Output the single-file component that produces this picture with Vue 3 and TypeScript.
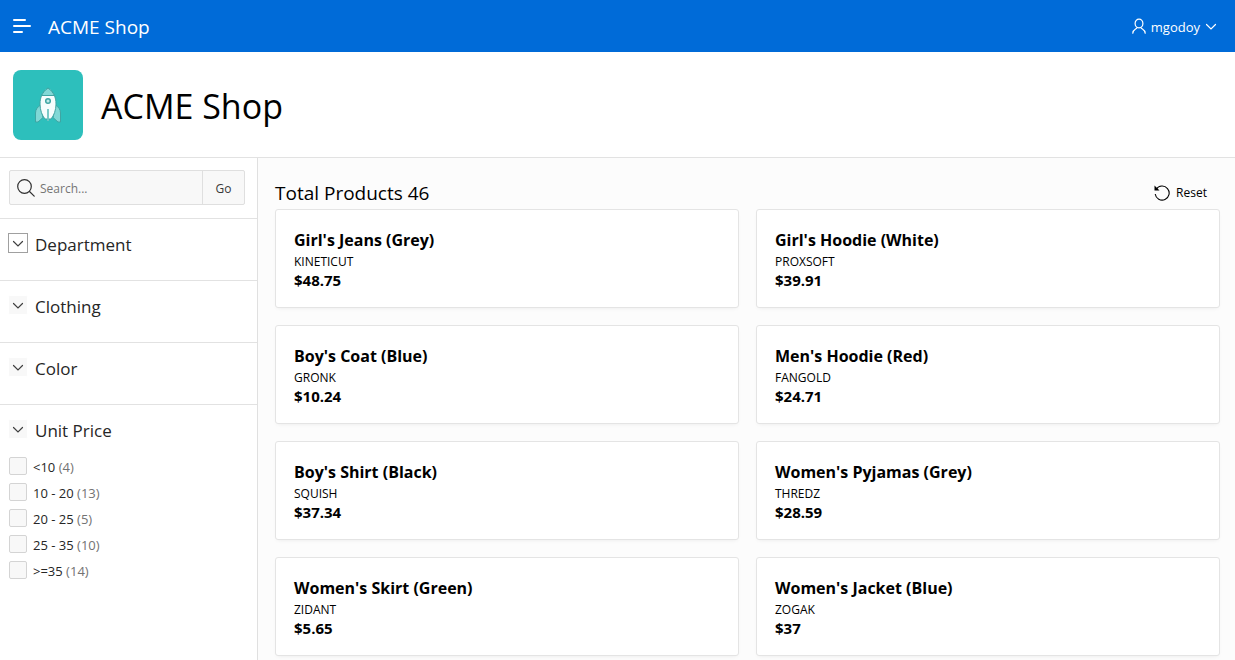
<script setup lang="ts">
import { ref } from 'vue'

interface Product {
  name: string
  brand: string
  price: string
}

interface PriceRange {
  id: string
  label: string
  count: number
}

const query = ref('')
const selected = ref<string[]>([])
const collapsedFacets: string[] = ['Department', 'Clothing', 'Color']

const ranges: PriceRange[] = [
  { id: 'p0', label: '<10', count: 4 },
  { id: 'p10', label: '10 - 20', count: 13 },
  { id: 'p20', label: '20 - 25', count: 5 },
  { id: 'p25', label: '25 - 35', count: 10 },
  { id: 'p35', label: '>=35', count: 14 },
]

const products: Product[] = [
  { name: "Girl's Jeans (Grey)", brand: 'KINETICUT', price: '$48.75' },
  { name: "Girl's Hoodie (White)", brand: 'PROXSOFT', price: '$39.91' },
  { name: "Boy's Coat (Blue)", brand: 'GRONK', price: '$10.24' },
  { name: "Men's Hoodie (Red)", brand: 'FANGOLD', price: '$24.71' },
  { name: "Boy's Shirt (Black)", brand: 'SQUISH', price: '$37.34' },
  { name: "Women's Pyjamas (Grey)", brand: 'THREDZ', price: '$28.59' },
  { name: "Women's Skirt (Green)", brand: 'ZIDANT', price: '$5.65' },
  { name: "Women's Jacket (Blue)", brand: 'ZOGAK', price: '$37' },
]

function reset(): void {
  query.value = ''
  selected.value = []
}
</script>

<template>
  <div class="page">
    <header class="topbar">
      <button class="menu" type="button" aria-label="Main navigation">
        <svg width="18" height="14" viewBox="0 0 18 14" fill="none" stroke="#fff" stroke-width="2" stroke-linecap="round">
          <path d="M1 1h11M1 7h16M1 13h8" />
        </svg>
      </button>
      <a class="brand" href="#">ACME Shop</a>
      <button class="user" type="button">
        <svg width="14" height="16" viewBox="0 0 14 16" fill="none" stroke="#fff" stroke-width="1.2" stroke-linecap="round">
          <ellipse cx="7" cy="5.500" rx="3.9" ry="4.4" />
          <path d="M5 9.700C4.400 11.300 1 11.100.8 15.200M9 9.700c.6 1.600 4 1.400 4.200 5.500" />
        </svg>
        <span>mgodoy</span>
        <svg width="12" height="8" viewBox="0 0 12 8" fill="none" stroke="#fff" stroke-width="1.2" stroke-linecap="round">
          <path d="M1.500 2.500 6 7l4.500-4.500" />
        </svg>
      </button>
    </header>

    <section class="hero">
      <div class="logo">
        <svg width="28" height="36" viewBox="0 0 28 36" stroke="#3fa5a3" stroke-width="1" stroke-linejoin="round">
          <path d="M6.500 18C3.500 20 1.500 22.500 1.500 26v9h2.500L9 30.500zM21.500 18c3 2 5 4.500 5 8v9H24l-5-4.500z" fill="#81d8d6" />
          <path d="M14 1C8.500 5 6 10 6 17c0 6 2 11.500 5 15h6c3-3.500 5-9 5-15 0-7-2.500-12-8-16z" fill="#f6fdfd" />
          <path d="M14 1c-2.800 2-5 4.500-6.400 7.500h12.800C19 5.500 16.800 3 14 1z" fill="#81d8d6" />
          <circle cx="14" cy="14" r="2.300" fill="#c0ebea" stroke-width="1.500" />
          <path d="M14 22v12" stroke="#6fc4c2" stroke-width="1.800" />
        </svg>
      </div>
      <h1>ACME Shop</h1>
    </section>

    <div class="body">
      <aside class="sidebar">
        <form class="search" @submit.prevent>
          <label class="field">
            <svg width="18" height="18" viewBox="0 0 18 18" fill="none" stroke="#303030" stroke-width="1.2" stroke-linecap="round">
              <circle cx="7.500" cy="7.500" r="6.800" />
              <path d="m12.500 12.500 4.700 4.700" />
            </svg>
            <input v-model="query" type="text" placeholder="Search..." aria-label="Search" />
          </label>
          <button class="go" type="submit">Go</button>
        </form>

        <section v-for="(facet, i) in collapsedFacets" :key="facet" class="facet">
          <div class="facet-head">
            <button class="toggle" :class="{ focused: i === 0 }" type="button" :aria-label="facet">
              <svg width="12" height="8" viewBox="0 0 12 8" fill="none" stroke="#404040" stroke-width="1.200" stroke-linecap="round">
                <path d="M1.500 2.500 6 7l4.500-4.500" />
              </svg>
            </button>
            <h2>{{ facet }}</h2>
          </div>
        </section>

        <section class="facet">
          <div class="facet-head">
            <button class="toggle" type="button" aria-label="Unit Price">
              <svg width="12" height="8" viewBox="0 0 12 8" fill="none" stroke="#404040" stroke-width="1.200" stroke-linecap="round">
                <path d="M1.500 2.500 6 7l4.500-4.500" />
              </svg>
            </button>
            <h2>Unit Price</h2>
          </div>
          <ul class="ranges">
            <li v-for="range in ranges" :key="range.id">
              <input :id="range.id" v-model="selected" type="checkbox" :value="range.id" />
              <label :for="range.id">{{ range.label }} <span class="count">({{ range.count }})</span></label>
            </li>
          </ul>
        </section>
      </aside>

      <main class="content">
        <div class="toolbar">
          <p class="total">Total Products 46</p>
          <button class="reset" type="button" @click="reset">
            <svg width="16" height="16" viewBox="0 0 16 16" fill="none" stroke="#000" stroke-width="1.100">
              <path d="M2.300 4.200A7 7 0 1 1 1.200 9" />
              <path d="M.5.500v5h5z" fill="#000" stroke="none" />
            </svg>
            <span>Reset</span>
          </button>
        </div>
        <ul class="cards">
          <li v-for="product in products" :key="product.name" class="card">
            <h3>{{ product.name }}</h3>
            <p class="maker">{{ product.brand }}</p>
            <p class="price">{{ product.price }}</p>
          </li>
        </ul>
      </main>
    </div>
  </div>
</template>

<style>
body {
  margin: 0;
}
</style>

<style scoped>
.page {
  display: flex;
  flex-direction: column;
  min-height: 100vh;
  background: #fff;
  color: #000;
  font-family: "Segoe UI", "Open Sans", "Noto Sans", sans-serif;
  font-size: 12px;
}

.page * {
  box-sizing: border-box;
}

h1,
h2,
h3,
p,
ul {
  margin: 0;
  padding: 0;
  font-weight: 400;
  list-style: none;
}

button,
input {
  margin: 0;
  padding: 0;
  border: 0;
  background: none;
  color: inherit;
  font: inherit;
}

svg {
  display: block;
  flex: none;
}

.topbar {
  display: flex;
  align-items: center;
  height: 52px;
  padding: 0 18px 0 13px;
  background: #006bd8;
  color: #fff;
}

.menu {
  width: 35px;
}

.brand {
  padding-top: 2px;
  color: #fff;
  font-size: 19px;
  line-height: 24px;
  text-decoration: none;
}

.user {
  display: flex;
  align-items: center;
  gap: 5px;
  margin-left: auto;
  font-size: 13px;
}

.user span {
  padding-top: 2px;
}

.hero {
  display: flex;
  align-items: center;
  gap: 18px;
  padding: 18px 13px 17px;
  border-bottom: 1px solid #e2e2e2;
}

.logo {
  display: flex;
  align-items: center;
  justify-content: center;
  width: 70px;
  height: 70px;
  border-radius: 8px;
  background: #2dbfbc;
}

h1 {
  padding-top: 2px;
  font-size: 34px;
  line-height: 44px;
}

.body {
  display: flex;
  flex: 1;
}

.sidebar {
  flex: none;
  width: 258px;
  border-right: 1px solid #e0e0e0;
}

.search {
  display: flex;
  height: 35px;
  margin: 12px 12px 13px 9px;
  border: 1px solid #dfdfdf;
  border-radius: 2px;
  background: #f8f8f8;
}

.field {
  display: flex;
  flex: 1;
  align-items: center;
  gap: 5px;
  min-width: 0;
  padding-left: 7px;
}

.field input {
  flex: 1;
  min-width: 0;
  padding-top: 2px;
  outline: 0;
}

.field input::placeholder {
  color: #757575;
  opacity: 1;
}

.go {
  width: 42px;
  padding-top: 2px;
  border-left: 1px solid #dfdfdf;
  color: #383838;
}

.facet {
  min-height: 62px;
  padding: 14px 8px 0;
  border-top: 1px solid #e2e2e2;
}

.facet-head {
  display: flex;
  align-items: flex-start;
  gap: 7px;
}

.toggle {
  display: flex;
  align-items: center;
  justify-content: center;
  width: 20px;
  height: 20px;
  border: 1px solid #fff;
  border-radius: 2px;
  background: #f8f8f8;
}

.toggle.focused {
  border-color: #a0a0a0;
  border-radius: 0;
  background: #fff;
}

h2 {
  color: #262626;
  font-size: 17px;
  line-height: 24px;
}

.ranges {
  padding: 10px 1px 0;
}

.ranges li {
  display: flex;
  align-items: center;
  gap: 6px;
  height: 26px;
  color: #262626;
  font-size: 13px;
}

.ranges label {
  padding-top: 2px;
}

.ranges input {
  appearance: none;
  width: 18px;
  height: 18px;
  border: 1px solid #d4d4d4;
  border-radius: 2px;
  background: #f8f8f8;
}

.ranges input:checked {
  background: #006bd8;
}

.count {
  color: #737373;
}

.content {
  flex: 1;
  min-width: 0;
  padding: 18px 15px 3px 17px;
  background: #fcfcfc;
}

.toolbar {
  display: flex;
  align-items: center;
  justify-content: space-between;
  height: 33px;
  padding-right: 13px;
}

.total {
  font-size: 19px;
  line-height: 24px;
}

.reset {
  display: flex;
  align-items: center;
  gap: 6px;
}

.cards {
  display: grid;
  grid-template-columns: 1fr 1fr;
  gap: 17px;
}

.card {
  height: 99px;
  padding: 19px 18px;
  border: 1px solid #e4e4e4;
  border-radius: 3px;
  background: #fff;
  box-shadow: 0 2px 4px -2px rgba(0, 0, 0, 0.08);
}

h3 {
  margin-bottom: 1px;
  font-size: 16px;
  font-weight: 700;
  line-height: 22px;
}

.maker {
  line-height: 20px;
}

.price {
  font-size: 15px;
  font-weight: 700;
  line-height: 16px;
}
</style>
